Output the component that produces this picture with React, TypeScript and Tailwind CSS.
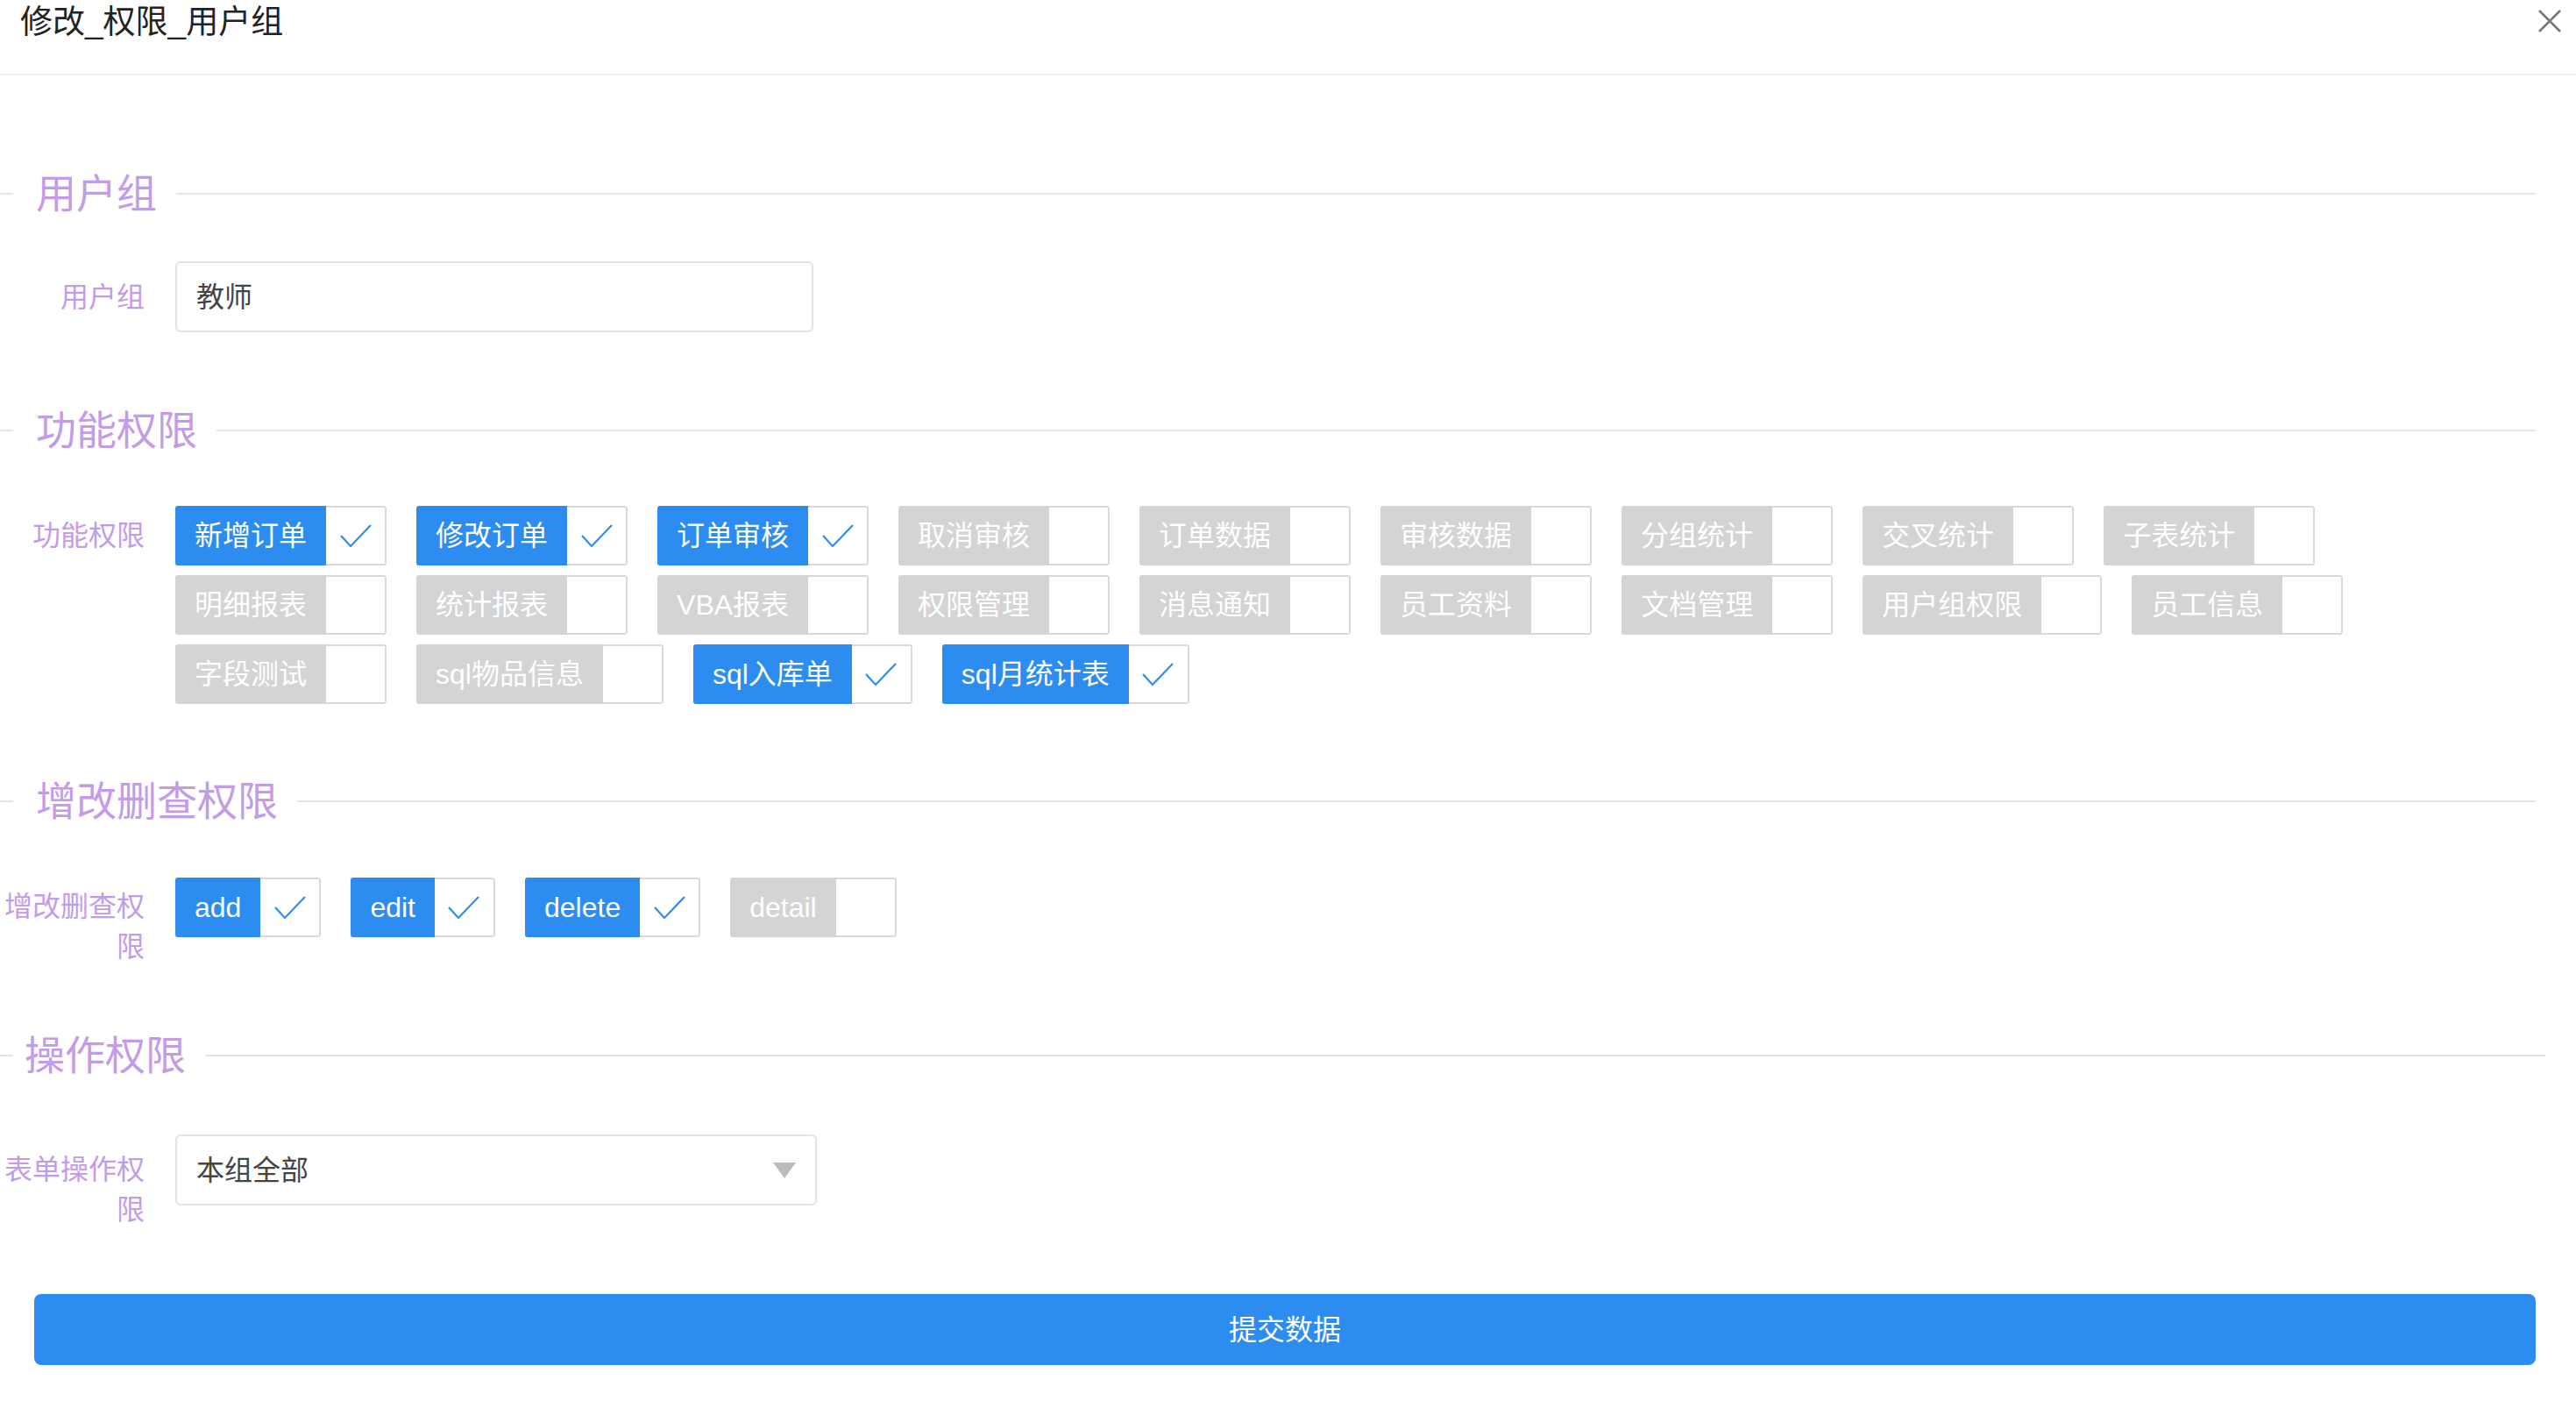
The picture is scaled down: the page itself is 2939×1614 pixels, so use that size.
import React from "react";

const F = { fontFamily: '"Liberation Sans", "Noto Sans CJK SC", sans-serif' };

const Check = () => (
  <svg width="40" height="30" viewBox="0 0 40 30" fill="none">
    <path d="M3 15 L14 27 L37 3" stroke="#2d8cf0" strokeWidth="2.2" />
  </svg>
);

function Item({ label, on }: { label: string; on: boolean }) {
  return (
    <div className="flex h-[68px] rounded-[3px] overflow-hidden">
      <div
        className={
          "flex items-center px-[22px] text-[32px] text-white " +
          (on ? "bg-[#2d8cf0]" : "bg-[#d4d4d4]")
        }
      >
        {label}
      </div>
      <div className="w-[69px] flex items-center justify-center bg-white border-2 border-l-0 border-[#d9d9d9] rounded-r-[3px]">
        {on && <Check />}
      </div>
    </div>
  );
}

function Legend({ text, first = 15, textLeft = 41, endPad = 46 }: { text: string; first?: number; textLeft?: number; endPad?: number }) {
  return (
    <div className="flex items-center h-[64px]" style={{ paddingRight: endPad }}>
      <div className="h-[2px] bg-[#e5e5e5]" style={{ width: first }} />
      <div className="text-[46px] text-[#c39be8] leading-none" style={{ marginLeft: textLeft - first, marginRight: 22 }}>
        {text}
      </div>
      <div className="flex-1 h-[2px] bg-[#e5e5e5]" />
    </div>
  );
}

const funcs: [string, boolean][] = [
  ["新增订单", true], ["修改订单", true], ["订单审核", true], ["取消审核", false], ["订单数据", false],
  ["审核数据", false], ["分组统计", false], ["交叉统计", false], ["子表统计", false],
  ["明细报表", false], ["统计报表", false], ["VBA报表", false], ["权限管理", false], ["消息通知", false],
  ["员工资料", false], ["文档管理", false], ["用户组权限", false], ["员工信息", false],
  ["字段测试", false], ["sql物品信息", false], ["sql入库单", true], ["sql月统计表", true],
];
const crud: [string, boolean][] = [["add", true], ["edit", true], ["delete", true], ["detail", false]];

export default function App() {
  return (
    <div style={F} className="w-[2939px] h-[1614px] bg-white relative">
      <div className="h-[86px] border-b-2 border-[#efefef] flex items-start pl-[23px] pt-[2px]">
        <div className="text-[37px] text-[#222] leading-[48px]">修改_权限_用户组</div>
      </div>
      <div className="absolute right-[14px] top-[8px]">
        <svg width="32" height="32" viewBox="0 0 32 32"><path d="M4 4 L28 28 M28 4 L4 28" stroke="#777" strokeWidth="2.5" /></svg>
      </div>

      <div className="mt-[103px]"><Legend text="用户组" /></div>
      <div className="flex items-center mt-[45px]">
        <div className="w-[165px] text-right text-[32px] text-[#c39be8]">用户组</div>
        <div className="ml-[35px] w-[728px] h-[81px] border-2 border-[#e3e3e3] rounded-[6px] flex items-center px-[22px] text-[32px] text-[#444]">教师</div>
      </div>

      <div className="mt-[80px]"><Legend text="功能权限" /></div>
      <div className="flex items-start mt-[54px]">
        <div className="w-[165px] text-right text-[32px] text-[#c39be8] leading-[68px]">功能权限</div>
        <div className="ml-[35px] w-[2693px] flex flex-wrap gap-x-[34px] gap-y-[11px]">
          {funcs.map(([l, o]) => <Item key={l} label={l} on={o} />)}
        </div>
      </div>

      <div className="mt-[79px]"><Legend text="增改删查权限" /></div>
      <div className="flex items-start mt-[55px]">
        <div className="w-[165px] text-right text-[32px] text-[#c39be8] leading-[46px] pt-[10px]">增改删查权限</div>
        <div className="ml-[35px] flex gap-x-[34px]">
          {crud.map(([l, o]) => <Item key={l} label={l} on={o} />)}
        </div>
      </div>

      <div className="mt-[69px]"><Legend text="操作权限" first={15} textLeft={28} endPad={35} /></div>
      <div className="flex items-start mt-[58px]">
        <div className="w-[165px] text-right text-[32px] text-[#c39be8] leading-[46px] pt-[17px]">表单操作权限</div>
        <div className="ml-[35px] w-[732px] h-[81px] border-2 border-[#e3e3e3] rounded-[6px] flex items-center justify-between px-[22px] text-[32px] text-[#444]">
          <span>本组全部</span>
          <svg width="26" height="18" viewBox="0 0 26 18"><path d="M0 0 H26 L13 18 Z" fill="#bbb" /></svg>
        </div>
      </div>

      <div className="mt-[73px] ml-[39px] mr-[46px] h-[81px] bg-[#2d8cf0] rounded-[8px] flex items-center justify-center text-white text-[32px]">
        提交数据
      </div>
    </div>
  );
}
